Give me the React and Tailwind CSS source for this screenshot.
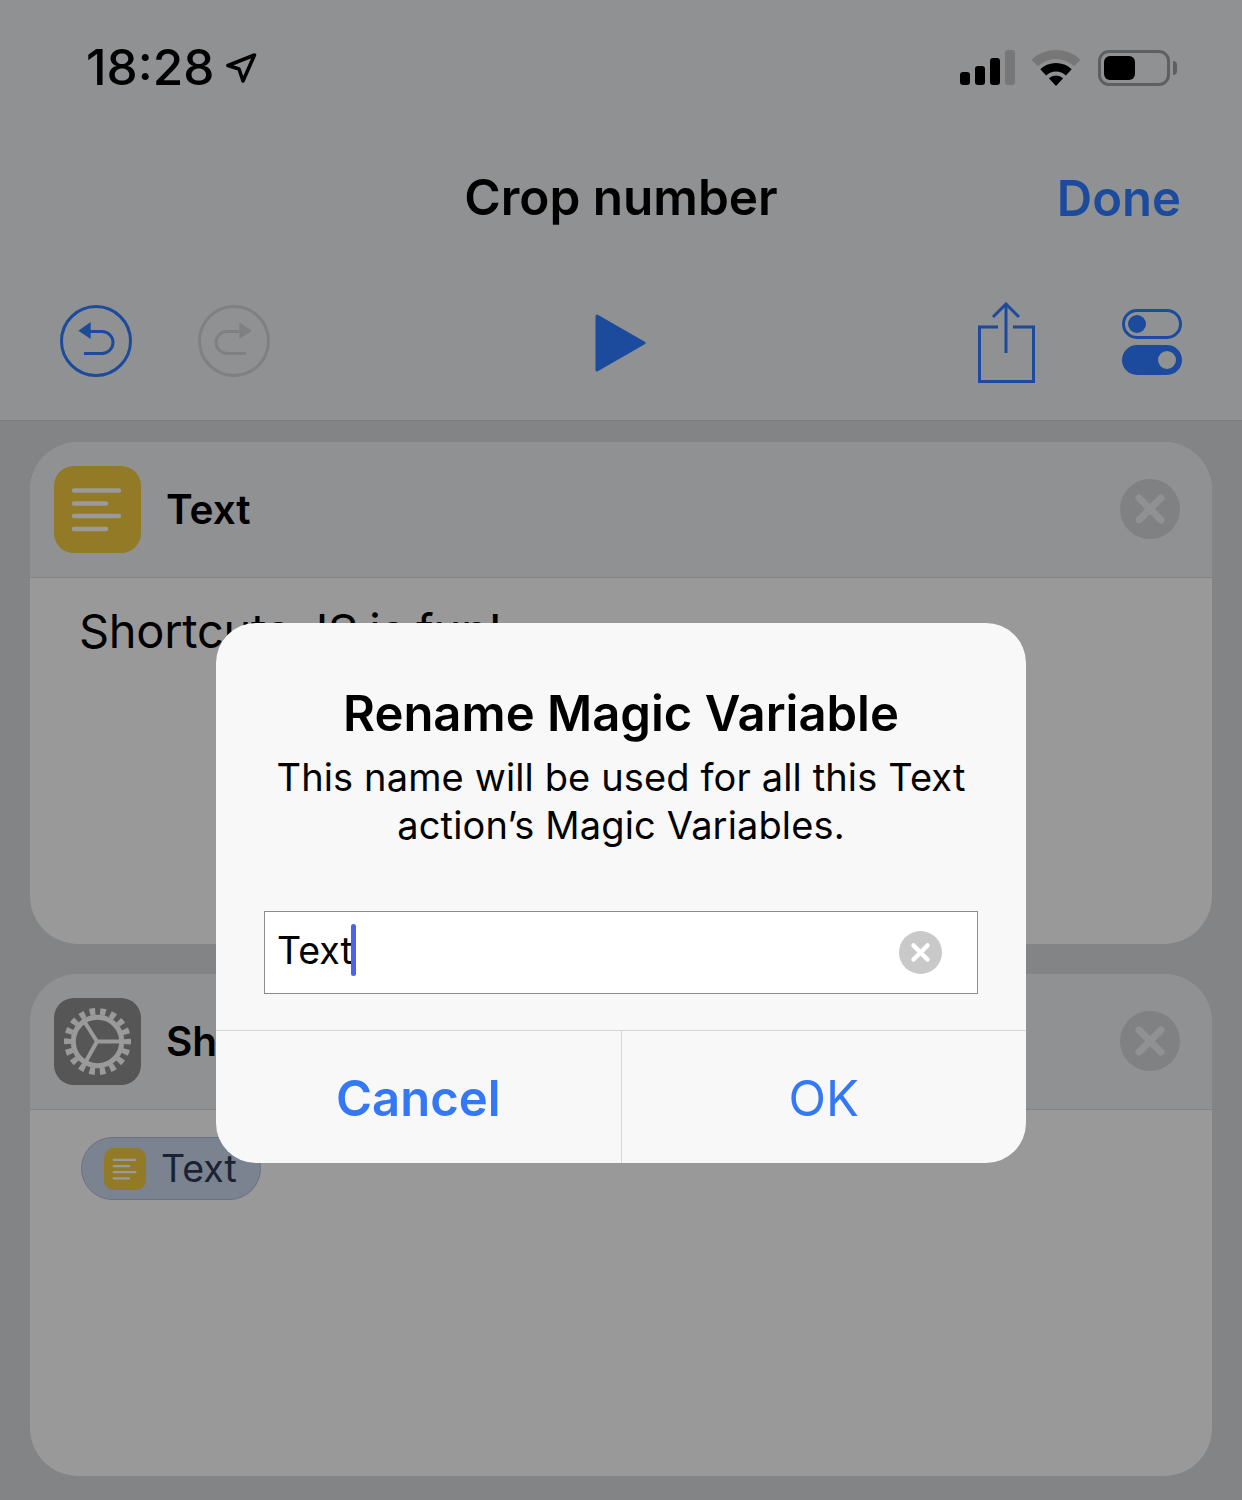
const TextLines = ({ className }) => (
  <svg viewBox="0 0 87 87" className={className}>
    <g stroke="#9a9a9a" strokeWidth="4.5" strokeLinecap="round">
      <line x1="20" y1="24.5" x2="65" y2="24.5" />
      <line x1="20" y1="37.5" x2="52" y2="37.5" />
      <line x1="20" y1="50" x2="65" y2="50" />
      <line x1="20" y1="63" x2="52" y2="63" />
    </g>
  </svg>
);

const Gear = () => (
  <svg viewBox="0 0 87 87" className="w-[87px] h-[87px]">
    <g fill="none" stroke="#9a9a9a">
      <circle cx="43.5" cy="43.5" r="24.2" strokeWidth="5" />
      <circle cx="43.5" cy="43.5" r="30" strokeWidth="7" strokeDasharray="5.5 4.97" strokeDashoffset="2.75" />
      <path d="M43 43.5H66M43 43.5L30 23M43 43.5L31 65" strokeWidth="4" />
    </g>
  </svg>
);

const CloseButton = () => (
  <div className="w-[60px] h-[60px] rounded-full bg-[#808182] flex items-center justify-center">
    <svg viewBox="0 0 60 60" className="w-[60px] h-[60px]">
      <path d="M19 19L41 41M41 19L19 41" stroke="#909192" strokeWidth="7" strokeLinecap="round" />
    </svg>
  </div>
);

const Card = ({ icon, iconBg, title, children }) => (
  <div className="h-[502px] rounded-[48px] overflow-hidden bg-[#999999]">
    <div className="h-[136px] bg-[#909192] border-b border-[#838485] pl-[24px] pr-[32px] flex items-center">
      <div className={`w-[87px] h-[87px] rounded-[20px] ${iconBg}`}>{icon}</div>
      <div className="ml-[25px] mt-[2px] text-[40.5px] font-semibold text-black leading-none">{title}</div>
      <div className="ml-auto mb-[2px]">
        <CloseButton />
      </div>
    </div>
    <div className="pl-[50px]">{children}</div>
  </div>
);

export default function App() {
  return (
    <div className="relative w-[1242px] h-[1500px] overflow-hidden bg-[#838485] font-['Inter',sans-serif]">
      <div className="h-[421px] bg-[#909192] border-b border-[#7c7d7e]">
        {/* status bar */}
        <div className="h-[136px] pl-[86px] pr-[65px] flex items-center justify-between">
          <div className="flex items-center">
            <span className="text-[49.5px] font-medium text-black leading-none">18:28</span>
            <svg viewBox="0 0 34 34" className="w-[34px] h-[34px] ml-[11px] mt-[2px]">
              <path d="M29.5 3L3 13.5L14 17L18 29Z" fill="none" stroke="#000" strokeWidth="3.5" strokeLinejoin="round" />
            </svg>
          </div>
          <div className="flex items-center gap-[17px]">
            <div className="flex items-end gap-[5px] h-[36px] pb-[1px] -mr-[1px]">
              <div className="w-[10px] h-[13px] rounded-[3px] bg-black" />
              <div className="w-[10px] h-[19px] rounded-[3px] bg-black" />
              <div className="w-[10px] h-[27px] rounded-[3px] bg-black" />
              <div className="w-[10px] h-[35px] rounded-[3px] bg-[#767776]" />
            </div>
            <svg viewBox="0 0 50 36" className="w-[50px] h-[36px]">
              <path d="M0.5 9.7A36 36 0 0 1 49.5 9.7L43.4 16.3A27 27 0 0 0 6.6 16.3Z" fill="#767776" />
              <path d="M9.3 19.2A23 23 0 0 1 40.7 19.2L34.9 25.4A14.5 14.5 0 0 0 15.1 25.4Z" fill="#000" />
              <path d="M17.8 28.3A10.5 10.5 0 0 1 32.2 28.3L25 36Z" fill="#000" />
            </svg>
            <div className="flex items-center gap-[3px]">
              <div className="w-[72px] h-[36px] rounded-[11px] border-[3px] border-[#5e5f60] p-[3px]">
                <div className="w-[31px] h-full rounded-[6px] bg-black" />
              </div>
              <div className="w-[4px] h-[14px] rounded-r-full bg-[#5e5f60]" />
            </div>
          </div>
        </div>

        {/* nav */}
        <div className="h-[124px] px-[61px] grid grid-cols-[1fr_auto_1fr] items-center">
          <div />
          <div className="text-[49.5px] font-semibold text-black leading-none">Crop number</div>
          <div className="justify-self-end text-[49px] font-semibold text-[#1c4a9c] leading-none">Done</div>
        </div>

        {/* toolbar */}
        <div className="h-[160px] pt-[2px] px-[60px] grid grid-cols-[1fr_auto_1fr] items-center">
          <div className="flex items-center gap-[66px]">
            <svg viewBox="0 0 72 72" className="w-[72px] h-[72px]" fill="none" stroke="#1c4a9c" strokeWidth="3">
              <circle cx="36" cy="36" r="34.5" />
              <path d="M30 26.5H42A11 11 0 0 1 42 48.5H24" />
              <path d="M18.3 25.7L30.7 17V34Z" fill="#1c4a9c" stroke="none" />
            </svg>
            <svg viewBox="0 0 72 72" className="w-[72px] h-[72px]" fill="none" stroke="#7f8081" strokeWidth="3">
              <circle cx="36" cy="36" r="34.5" />
              <path d="M41 26.5H29A11 11 0 0 0 29 48.5H48" />
              <path d="M54 25.7L41.3 17V34Z" fill="#7f8081" stroke="none" />
            </svg>
          </div>
          <svg viewBox="0 0 52 58" className="w-[52px] h-[58px] mt-[4px]">
            <path d="M2 2L49 29L2 56Z" fill="#1c4a9c" stroke="#1c4a9c" strokeWidth="3" strokeLinejoin="round" />
          </svg>
          <div className="flex items-center justify-end gap-[87px] pt-[2px]">
            <svg viewBox="0 0 58 81" className="w-[58px] h-[81px]" fill="none" stroke="#1c4a9c" strokeWidth="3">
              <path d="M21 25H2.5V79.5H56.5V25H36" />
              <path d="M29 2V51" />
              <path d="M16 15L29 2L42 15" />
            </svg>
            <div className="flex flex-col gap-[6px]">
              <div className="w-[60px] h-[30px] rounded-full border-[3px] border-[#1c4a9c] pl-[3px] flex items-center">
                <div className="w-[18px] h-[18px] rounded-full bg-[#1c4a9c]" />
              </div>
              <div className="w-[60px] h-[30px] rounded-full bg-[#1c4a9c] pr-[6px] flex items-center justify-end">
                <div className="w-[18px] h-[18px] rounded-full bg-[#909192]" />
              </div>
            </div>
          </div>
        </div>
      </div>

      {/* action cards */}
      <div className="px-[30px] pt-[21px] flex flex-col gap-[30px]">
        <Card title="Text" iconBg="bg-[#937a26]" icon={<TextLines className="w-[87px] h-[87px]" />}>
          <div className="pt-[28px] -ml-[1px] text-[47px] leading-[50px] tracking-[-0.3px] [word-spacing:-1.5px] text-black">Shortcuts JS is fun!</div>
        </Card>
        <Card title="Show Result" iconBg="bg-[#565657]" icon={<Gear />}>
          <div className="pt-[27px]">
            <div className="ml-[1px] w-[180px] h-[63px] rounded-full bg-[#7b8290] border border-[#6b7280] pl-[22px] flex items-center gap-[15px]">
              <TextLines className="w-[42px] h-[42px] rounded-[10px] bg-[#937a26]" />
              <span className="text-[37.5px] leading-none text-[#1a2233]">Text</span>
            </div>
          </div>
        </Card>
      </div>

      {/* alert */}
      <div className="absolute left-[216px] top-[623px] w-[810px] h-[540px] rounded-[40px] bg-[#f8f8f8] overflow-hidden flex flex-col">
        <div className="pt-[64px] text-center text-[49px] font-semibold leading-[54px] text-black">Rename Magic Variable</div>
        <div className="mt-[12px] text-center text-[38px] leading-[48px] tracking-[0.13px] text-black">
          This name will be used for all this Text
          <br />
          action’s Magic Variables.
        </div>
        <div className="mt-[62px] mx-[48px] h-[83px] bg-white border border-[#8c8c8c] pl-[12px] pr-[35px] flex items-center">
          <span className="text-[37.5px] leading-none text-black mb-[3px]">Text</span>
          <div className="w-[5px] h-[52px] rounded-full bg-[#4a63e8] -ml-[2px] mb-[5px]" />
          <div className="ml-auto w-[43px] h-[43px] rounded-full bg-[#c9c9c9]">
            <svg viewBox="0 0 43 43" className="w-[43px] h-[43px]">
              <path d="M14.5 14.5L28.5 28.5M28.5 14.5L14.5 28.5" stroke="#fff" strokeWidth="4.5" strokeLinecap="round" />
            </svg>
          </div>
        </div>
        <div className="mt-[36px] flex-1 border-t border-[#d6d6d8] flex">
          <div className="flex-1 flex items-center justify-center border-r border-[#d6d6d8] pt-[3px] text-[49px] font-semibold text-[#3478f6]">Cancel</div>
          <div className="flex-1 flex items-center justify-center pt-[3px] text-[49px] text-[#3478f6]">OK</div>
        </div>
      </div>
    </div>
  );
}
